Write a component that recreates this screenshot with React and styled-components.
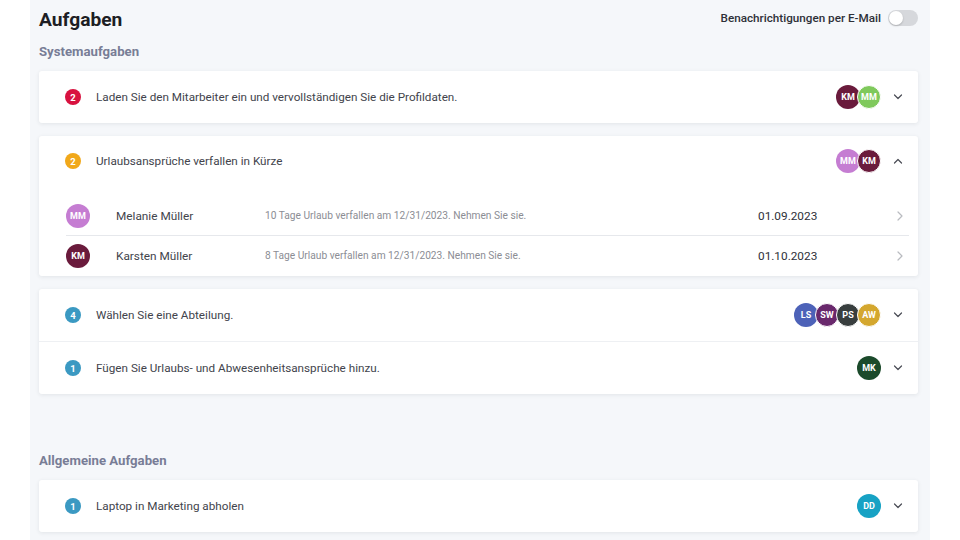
import styled, { createGlobalStyle } from "styled-components";

const GlobalStyle = createGlobalStyle`
  body {
    margin: 0;
    background: #ffffff;
    font-family: Roboto, "Noto Sans", sans-serif;
    color: #3b3d45;
  }
`;

const Page = styled.div`
  display: flex;
  min-height: 100vh;
  padding-left: 30px;
`;

const Panel = styled.main`
  width: 900px;
  box-sizing: border-box;
  background: #f5f7fa;
  padding: 0 12px 0 9px;
`;

const Header = styled.header`
  height: 38px;
  display: flex;
  align-items: center;
  justify-content: space-between;
`;

const Title = styled.h1`
  margin: 0;
  font-size: 19.2px;
  font-weight: 700;
  color: #1d1e24;
`;

const Notify = styled.label`
  display: flex;
  align-items: center;
  gap: 7px;
  font-size: 11.7px;
  font-weight: 500;
  color: #2e3038;
  margin-top: -3px;
`;

const Toggle = styled.span`
  position: relative;
  width: 30px;
  height: 16px;
  border-radius: 8px;
  background: #d6d8dc;

  &::after {
    content: "";
    position: absolute;
    left: 1px;
    top: 1px;
    width: 14px;
    height: 14px;
    border-radius: 50%;
    background: #fff;
    box-shadow: 0 1px 2px rgba(0, 0, 0, 0.2);
  }
`;

const SectionTitle = styled.h2`
  margin: ${(p) => p.$top}px 0 9px;
  height: 20px;
  line-height: 20px;
  font-size: 13.2px;
  font-weight: 700;
  color: #787d96;
`;

const Card = styled.section`
  background: #fff;
  border-radius: 3px;
  box-shadow: 0 1px 4px rgba(30, 40, 60, 0.09);
  margin-bottom: 13px;
`;

const TaskRow = styled.div`
  height: ${(p) => p.$h || 52}px;
  display: flex;
  align-items: center;
  padding: 0 15px 0 26px;

  & + & {
    border-top: 1px solid #eef0f3;
  }
`;

const Badge = styled.span`
  width: 16px;
  height: 16px;
  border-radius: 50%;
  background: ${(p) => p.$color};
  color: #fff;
  font-size: 9.5px;
  font-weight: 700;
  display: flex;
  align-items: center;
  justify-content: center;
  flex-shrink: 0;
`;

const TaskText = styled.span`
  flex: 1;
  margin-left: 15px;
  font-size: 11.7px;
  color: #42444c;
`;

const Stack = styled.div`
  display: flex;
  margin-right: 12px;
`;

const Avatar = styled.span`
  width: 24px;
  height: 24px;
  box-sizing: border-box;
  border-radius: 50%;
  background: ${(p) => p.$color};
  color: #fff;
  font-size: 9px;
  font-weight: 700;
  display: flex;
  align-items: center;
  justify-content: center;
  border: ${(p) => (p.$ring ? "1.5px solid #fff" : "none")};

  & + & {
    margin-left: -3px;
  }
`;

const SubList = styled.div`
  padding: 10px 9px 1px 27px;
`;

const SubRow = styled.div`
  height: 39px;
  display: grid;
  grid-template-columns: 50px 149px 1fr 139px 12px;
  align-items: center;

  &:not(:last-child) {
    border-bottom: 1px solid #e6e8ec;
  }
`;

const Name = styled.span`
  font-size: 11.8px;
  color: #42444c;
`;

const Note = styled.span`
  font-size: 10.2px;
  color: #8b8d94;
`;

const DateText = styled.span`
  font-size: 11.8px;
  color: #2e3038;
`;

const Chevron = ({ up }) => (
  <svg width="10" height="6" viewBox="0 0 10 6" style={{ flexShrink: 0 }}>
    <polyline
      points={up ? "1.5,5 5,1.5 8.5,5" : "1.5,1 5,4.5 8.5,1"}
      fill="none"
      stroke="#4a4c55"
      strokeWidth="1.2"
      strokeLinecap="round"
      strokeLinejoin="round"
    />
  </svg>
);

const ChevronRight = () => (
  <svg width="6" height="10" viewBox="0 0 6 10">
    <polyline
      points="1,1 5,5 1,9"
      fill="none"
      stroke="#b9bbc0"
      strokeWidth="1.2"
      strokeLinecap="round"
      strokeLinejoin="round"
    />
  </svg>
);

const colors = {
  red: "#d8123f",
  orange: "#f1a81a",
  blue: "#3b99c2",
};

function AvatarStack({ people }) {
  return (
    <Stack>
      {people.map((p, i) => (
        <Avatar key={p.label} $color={p.color} $ring={people.length > 1 && i > 0}>
          {p.label}
        </Avatar>
      ))}
    </Stack>
  );
}

function Task({ n, color, text, people, open, height }) {
  return (
    <TaskRow $h={height}>
      <Badge $color={color}>{n}</Badge>
      <TaskText>{text}</TaskText>
      <AvatarStack people={people} />
      <Chevron up={open} />
    </TaskRow>
  );
}

const KM = { label: "KM", color: "#6a1b3c" };

export default function App() {
  return (
    <>
      <GlobalStyle />
      <Page>
        <Panel>
          <Header>
            <Title>Aufgaben</Title>
            <Notify>
              Benachrichtigungen per E-Mail
              <Toggle />
            </Notify>
          </Header>

          <SectionTitle $top={4}>Systemaufgaben</SectionTitle>

          <Card>
            <Task
              n={2}
              color={colors.red}
              text="Laden Sie den Mitarbeiter ein und vervollständigen Sie die Profildaten."
              people={[KM, { label: "MM", color: "#7fc95c" }]}
            />
          </Card>

          <Card>
            <Task
              n={2}
              color={colors.orange}
              text="Urlaubsansprüche verfallen in Kürze"
              people={[{ label: "MM", color: "#c57dd2" }, KM]}
              open
              height={50}
            />
            <SubList>
              <SubRow>
                <Avatar $color="#c57dd2">MM</Avatar>
                <Name>Melanie Müller</Name>
                <Note>10 Tage Urlaub verfallen am 12/31/2023. Nehmen Sie sie.</Note>
                <DateText>01.09.2023</DateText>
                <ChevronRight />
              </SubRow>
              <SubRow>
                <Avatar $color="#6a1b3c">KM</Avatar>
                <Name>Karsten Müller</Name>
                <Note>8 Tage Urlaub verfallen am 12/31/2023. Nehmen Sie sie.</Note>
                <DateText>01.10.2023</DateText>
                <ChevronRight />
              </SubRow>
            </SubList>
          </Card>

          <Card>
            <Task
              n={4}
              color={colors.blue}
              text="Wählen Sie eine Abteilung."
              people={[
                { label: "LS", color: "#4d62b8" },
                { label: "SW", color: "#69286c" },
                { label: "PS", color: "#383e3e" },
                { label: "AW", color: "#d4a72e" },
              ]}
            />
            <Task
              n={1}
              color={colors.blue}
              text="Fügen Sie Urlaubs- und Abwesenheitsansprüche hinzu."
              people={[{ label: "MK", color: "#1b4a2b" }]}
            />
          </Card>

          <SectionTitle $top={57}>Allgemeine Aufgaben</SectionTitle>

          <Card>
            <Task
              n={1}
              color={colors.blue}
              text="Laptop in Marketing abholen"
              people={[{ label: "DD", color: "#17a2c4" }]}
            />
          </Card>
        </Panel>
      </Page>
    </>
  );
}
